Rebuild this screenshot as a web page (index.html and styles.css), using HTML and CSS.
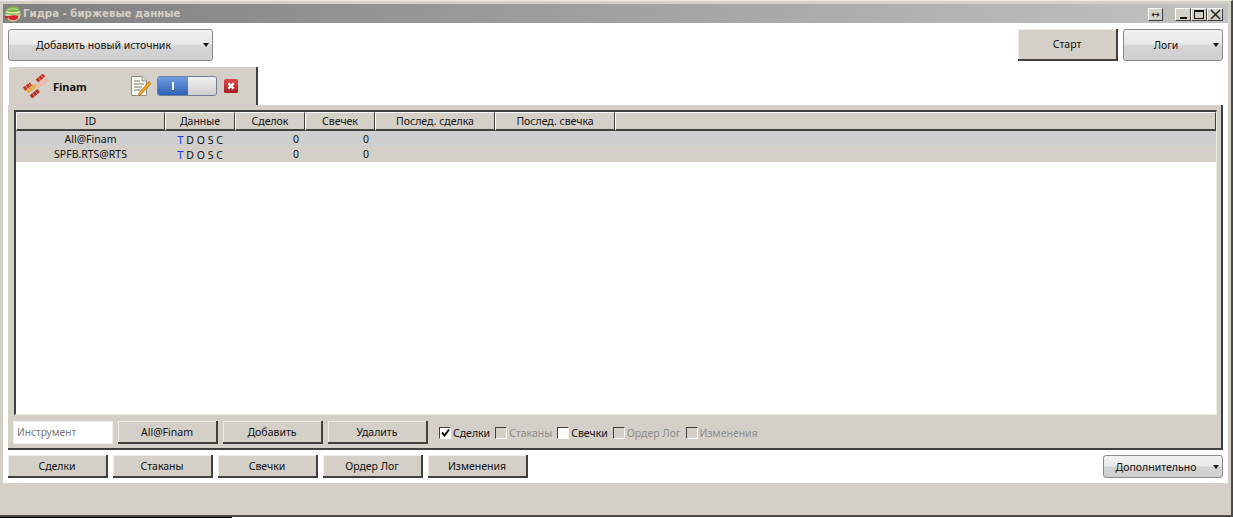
FILE: index.html
```html
<!DOCTYPE html>
<html lang="ru">
<head>
  <meta charset="UTF-8">
  <title>Гидра - биржевые данные</title>
  <link rel="stylesheet" href="styles.css">
</head>
<body>
  <div class="window">
    <div class="titlebar">
      <svg class="app-icon" width="16" height="18" viewBox="0 0 16 18">
        <circle cx="8" cy="9" r="7.6" fill="#e6e2b8" stroke="#a89a60" stroke-width=".6"/>
        <path d="M1.5 6 Q3 1.5 8 1.5 Q13 1.5 14.8 6 Q8 8 1.5 6 Z" fill="#6fb23e"/>
        <path d="M2.5 4.5 Q8 3 13.5 4.5" fill="none" stroke="#c9e6a0" stroke-width="1"/>
        <path d="M1 8.5 Q8 10 15 8.5" fill="none" stroke="#8cc459" stroke-width="1.4"/>
        <path d="M3 11 Q8 9.8 13.5 10.6 L12.5 14 Q8 16.5 4 14 Z" fill="#d8242a"/>
        <rect x="0" y="11" width="3.5" height="2.5" fill="#c8282a"/>
      </svg>
      <span class="title">Гидра - биржевые данные</span>
      <div class="win-buttons">
        <span class="win-btn win-resize">↔</span>
        <span class="win-btn win-min"><i></i></span>
        <span class="win-btn win-max"><i></i></span>
        <span class="win-btn win-close">
          <svg width="11" height="11" viewBox="0 0 11 11"><path d="M1 1 L10 10 M10 1 L1 10" stroke="#222" stroke-width="1.5"/></svg>
        </span>
      </div>
    </div>

    <div class="content">
      <div class="top-row">
        <div class="dropdown source-drop"><span>Добавить новый источник</span><b class="caret"></b></div>
        <div class="top-right">
          <div class="btn start-btn">Старт</div>
          <div class="dropdown logs-drop"><span>Логи</span><b class="caret"></b></div>
        </div>
      </div>

      <div class="tab">
        <svg class="finam-icon" width="26" height="24" viewBox="0 0 26 24">
          <path d="M1 15 L8 10" stroke="#c8322a" stroke-width="4" stroke-dasharray="3 .5"/>
          <path d="M4 18 L13 11" stroke="#e9a93a" stroke-width="4" stroke-dasharray="3 .5"/>
          <path d="M8 23 L16 16" stroke="#b82a22" stroke-width="4" stroke-dasharray="3 .5"/>
          <path d="M14 7 L21 1" stroke="#c8322a" stroke-width="4" stroke-dasharray="3 .5"/>
          <path d="M14 13 L25 5" stroke="#efb5a5" stroke-width="3.6" stroke-dasharray="3 .5"/>
        </svg>
        <span class="tab-name">Finam</span>
        <svg class="note-icon" width="22" height="22" viewBox="0 0 22 22">
          <path d="M1.5 1.5 H12 L16.5 6 V20.5 H1.5 Z" fill="#fbfbf6" stroke="#8d8d85"/>
          <path d="M12 1.5 V6 H16.5" fill="#e4e4dc" stroke="#8d8d85"/>
          <path d="M4 6 H10 M4 9 H14 M4 12 H12 M4 15 H10" stroke="#77776f"/>
          <path d="M9 18 L19 6.5 L21 8.5 L11 19.5 L8.5 20 Z" fill="#f2a51f" stroke="#b86a10" stroke-width=".7"/>
        </svg>
        <div class="toggle"><div class="toggle-on"><i></i></div><div class="toggle-off"></div></div>
        <svg class="del-icon" width="14" height="14" viewBox="0 0 14 14">
          <defs>
            <linearGradient id="del-fill" x1="0" y1="0" x2="0" y2="1">
              <stop offset="0" stop-color="#e0484a"/>
              <stop offset="1" stop-color="#a81c22"/>
            </linearGradient>
          </defs>
          <rect width="14" height="14" rx="1.5" fill="url(#del-fill)"/>
          <path d="M4.3 4.3 L9.7 9.7 M9.7 4.3 L4.3 9.7" stroke="#fff" stroke-width="2.4"/>
        </svg>
      </div>

      <div class="panel">
        <div class="table">
          <div class="thead">
            <div class="th c-id">ID</div>
            <div class="th c-data">Данные</div>
            <div class="th c-num">Сделок</div>
            <div class="th c-num">Свечек</div>
            <div class="th c-date">Послед. сделка</div>
            <div class="th c-date">Послед. свечка</div>
            <div class="th c-rest"></div>
          </div>
          <div class="tr odd">
            <div class="td c-id">All@Finam</div>
            <div class="td c-data"><em>T</em> D O S C</div>
            <div class="td c-num right">0</div>
            <div class="td c-num right">0</div>
          </div>
          <div class="tr even">
            <div class="td c-id">SPFB.RTS@RTS</div>
            <div class="td c-data"><em>T</em> D O S C</div>
            <div class="td c-num right">0</div>
            <div class="td c-num right">0</div>
          </div>
        </div>

        <div class="tools">
          <div class="search">Инструмент</div>
          <div class="btn">All@Finam</div>
          <div class="btn">Добавить</div>
          <div class="btn">Удалить</div>
          <div class="checks">
            <label class="check"><span class="box active">
              <svg width="9" height="9" viewBox="0 0 9 9"><path d="M1 4.5 L3.5 7.5 L8 1.5" fill="none" stroke="#111" stroke-width="2"/></svg>
            </span>Сделки</label>
            <label class="check off"><span class="box"></span>Стаканы</label>
            <label class="check"><span class="box active"></span>Свечки</label>
            <label class="check off"><span class="box"></span>Ордер Лог</label>
            <label class="check off"><span class="box"></span>Изменения</label>
          </div>
        </div>
      </div>

      <div class="bottom-row">
        <div class="btn">Сделки</div>
        <div class="btn">Стаканы</div>
        <div class="btn">Свечки</div>
        <div class="btn">Ордер Лог</div>
        <div class="btn">Изменения</div>
        <div class="dropdown more-drop"><span>Дополнительно</span><b class="caret"></b></div>
      </div>
    </div>

    <div class="statusbar"></div>
  </div>
  <div class="under"></div>
</body>
</html>
```

FILE: styles.css
```css
* {
  box-sizing: border-box;
}

html, body {
  margin: 0;
  height: 518px;
  overflow: hidden;
}

body {
  background: #fff;
  font-family: "Noto Sans", "DejaVu Sans", sans-serif;
  font-size: 10.5px;
  color: #111;
}

.window {
  height: 517px;
  display: flex;
  flex-direction: column;
  padding: 3px 3px 0 3px;
  background: #d4d0c8;
  border-top: 1px solid #ececec;
  border-right: 2px solid #4a4a4a;
  border-bottom: 2px solid #4a4a4a;
}

.under {
  width: 232px;
  height: 1px;
  background: #000;
}

.titlebar {
  height: 19px;
  display: flex;
  align-items: center;
  padding: 0 5px 0 2px;
  background: linear-gradient(to right, #808080, #c2c2c2);
}

.app-icon {
  flex: none;
}

.title {
  margin-left: 2px;
  font-family: "DejaVu Sans", sans-serif;
  font-size: 10.2px;
  font-weight: bold;
  color: #d4d0c8;
}

.win-buttons {
  margin-left: auto;
  display: flex;
  align-items: center;
}

.win-btn {
  width: 16px;
  height: 13px;
  margin-top: 1px;
  display: flex;
  align-items: center;
  justify-content: center;
  background: #d4d0c8;
  border: 1px solid;
  border-color: #fff #404040 #404040 #fff;
}

.win-resize {
  width: 15px;
  margin-right: 12px;
  font-size: 10px;
  line-height: 1;
}

.win-min i {
  width: 7px;
  height: 2px;
  margin-top: 7px;
  background: #111;
}

.win-max i {
  width: 10px;
  height: 9px;
  border: 1px solid #111;
  border-top-width: 2px;
}

.content {
  height: 460px;
  padding: 6px 5px 0 5px;
  background: #fff;
}

.top-row {
  display: flex;
  justify-content: space-between;
}

.top-right {
  display: flex;
  gap: 5px;
}

.btn {
  width: 100px;
  height: 23px;
  display: flex;
  align-items: center;
  justify-content: center;
  background: #d4d0c8;
  border-bottom: 2px solid #404040;
  border-right: 2px solid #404040;
  box-shadow: inset 1px 1px 0 #efedea;
}

.start-btn {
  height: 32px;
}

.dropdown {
  position: relative;
  display: flex;
  align-items: center;
  justify-content: center;
  padding-right: 14px;
  background: linear-gradient(to bottom, #f1f1f1 0%, #e9e9e9 46%, #d4d4d4 54%, #d0d0d0 100%);
  border: 1px solid #8a8a8a;
  border-radius: 3px;
}

.caret {
  position: absolute;
  right: 3px;
  top: 50%;
  margin-top: -2px;
  border: 3.5px solid transparent;
  border-top: 4px solid #111;
  border-bottom: 0;
}

.source-drop {
  width: 205px;
  height: 32px;
}

.logs-drop {
  width: 100px;
  height: 32px;
}

.more-drop {
  width: 120px;
  height: 23px;
  margin-left: auto;
}

.tab {
  width: 249px;
  height: 38px;
  margin: 6px 0 0 1px;
  display: flex;
  align-items: center;
  padding-left: 14px;
  background: #d4d0c8;
  border-right: 2px solid #404040;
  border-radius: 3px 0 0 0;
}

.tab-name {
  margin-left: 4px;
  font-size: 11px;
  font-weight: bold;
}

.note-icon {
  margin-left: 43px;
}

.toggle {
  width: 60px;
  height: 20px;
  margin-left: 5px;
  display: flex;
  border: 1px solid #6f7f9c;
  border-radius: 3px;
  overflow: hidden;
}

.toggle-on {
  width: 30px;
  display: flex;
  align-items: center;
  justify-content: center;
  background: linear-gradient(to bottom, #6f9be0, #2d62b8);
}

.toggle-on i {
  width: 2px;
  height: 8px;
  background: #fff;
}

.toggle-off {
  flex: 1;
  background: linear-gradient(to bottom, #f0f0f0, #cfcfcf);
}

.del-icon {
  margin-left: 7px;
}

.panel {
  height: 345px;
  padding: 5px 4px 0 5px;
  background: #d4d0c8;
  border-right: 2px solid #404040;
  border-bottom: 2px solid #404040;
}

.table {
  height: 305px;
  margin-left: 1px;
  background: #fff;
  border-left: 2px solid #404040;
  border-top: 2px solid #404040;
  border-right: 1px solid #efedea;
  border-bottom: 1px solid #efedea;
}

.thead {
  display: flex;
  height: 19px;
}

.th {
  display: flex;
  align-items: center;
  justify-content: center;
  background: #d4d0c8;
  border-top: 1px solid #fff;
  border-left: 1px solid #fff;
  border-right: 1px solid #404040;
  border-bottom: 2px solid #404040;
}

.c-id { width: 149px; }
.c-data { width: 70px; }
.c-num { width: 70px; }
.c-date { width: 120px; }
.c-rest { flex: 1; }

.tr {
  display: flex;
  height: 15px;
  line-height: 17px;
}

.odd { background: #cfcfcf; }
.even { height: 16px; background: #d4d0c8; }

.td {
  text-align: center;
}

.td.right {
  text-align: right;
  padding-right: 6px;
}

.td em {
  font-style: normal;
  color: #1f3fe0;
  font-size: 11.5px;
}

.tools {
  display: flex;
  align-items: center;
  gap: 5px;
  height: 25px;
  margin-top: 5px;
}

.search {
  width: 100px;
  height: 23px;
  padding-left: 3px;
  font-size: 10.2px;
  line-height: 21px;
  color: #777;
  background: #fff;
  border: 1px solid #efedea;
}

.checks {
  display: flex;
  align-items: center;
  gap: 5px;
  margin-left: 6px;
}

.check {
  display: flex;
  align-items: center;
  gap: 2px;
}

.check.off {
  color: #8c8c8c;
}

.box {
  width: 12px;
  height: 12px;
  display: flex;
  align-items: center;
  justify-content: center;
  border: 1px solid;
  border-color: #404040 #fff #fff #404040;
}

.box.active {
  background: #fff;
}

.bottom-row {
  display: flex;
  align-items: center;
  gap: 5px;
  height: 23px;
  margin-top: 5px;
}

.statusbar {
  flex: 1;
  background: #d4d0c8;
}
```
